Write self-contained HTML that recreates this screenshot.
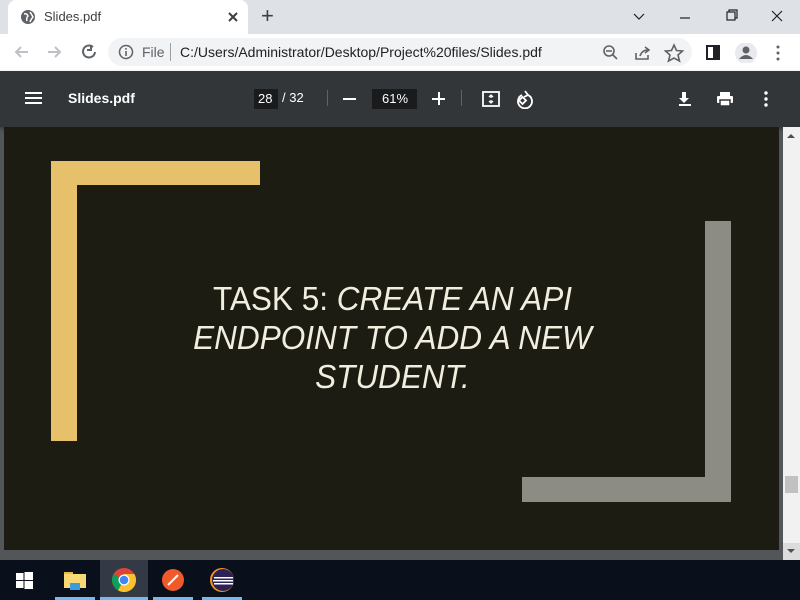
<!DOCTYPE html>
<html><head><style>
*{margin:0;padding:0;box-sizing:border-box}
body{width:800px;height:600px;overflow:hidden;position:relative;font-family:"Liberation Sans",sans-serif;background:#525659}
.a{position:absolute}
</style></head><body>
<!-- tab bar -->
<div class="a" style="left:0;top:0;width:800px;height:34px;background:#dee1e6"></div>
<div class="a" style="left:8px;top:0;width:240px;height:34px;background:#fff;border-radius:8px 8px 0 0"></div>
<svg class="a" style="left:20px;top:9px" width="16" height="16"><circle cx="8" cy="8" r="7" fill="#5f6368"/><path d="M4 5 Q7 4 8 7 Q6 9 7 12 M10 3 Q12 6 13 8 Q11 10 10 13" stroke="#fff" stroke-width="1.5" fill="none"/></svg>
<div class="a" style="left:44px;top:9px;font-size:13px;color:#3c4043">Slides.pdf</div>
<svg class="a" style="left:227px;top:11px" width="12" height="12" stroke="#3c4043" stroke-width="2"><path d="M2 2 l8 8 M10 2 l-8 8"/></svg>
<div class="a" style="left:261px;top:3px;font-size:22px;color:#3c4043">+</div>
<svg class="a" style="left:630px;top:8px" width="160" height="18" stroke="#202124" fill="none" stroke-width="1.2"><path d="M4 6 l5 5 l5 -5"/><path d="M50 10 h10"/><rect x="97" y="4" width="8" height="8"/><path d="M99 4 v-2 h8 v8 h-2"/><path d="M142 3 l10 10 M152 3 l-10 10"/></svg>
<!-- toolbar -->
<div class="a" style="left:0;top:34px;width:800px;height:37px;background:#fff"></div>
<svg class="a" style="left:12px;top:42px" width="90" height="20" fill="none" stroke-width="2"><path d="M16 10 H4 M9 5 l-5 5 5 5" stroke="#bdc1c6"/><path d="M36 10 H48 M43 5 l5 5 -5 5" stroke="#bdc1c6"/><path d="M88 10 a6 6 0 1 1 -2 -5" stroke="#5f6368" transform="translate(-5,0)"/><path d="M80 3 v5 h-4" stroke="#5f6368" transform="translate(-1,0)"/></svg>
<div class="a" style="left:108px;top:38px;width:584px;height:28px;background:#f1f3f4;border-radius:14px"></div>
<svg class="a" style="left:118px;top:44px" width="16" height="16"><circle cx="8" cy="8" r="6.5" stroke="#5f6368" stroke-width="1.5" fill="none"/><rect x="7.2" y="7" width="1.6" height="5" fill="#5f6368"/><rect x="7.2" y="4" width="1.6" height="1.6" fill="#5f6368"/></svg>
<div class="a" style="left:142px;top:44px;font-size:14px;color:#5f6368">File</div>
<div class="a" style="left:170px;top:43px;width:1px;height:18px;background:#9aa0a6"></div>
<div class="a" style="left:180px;top:44px;font-size:14px;color:#202124">C:/Users/Administrator/Desktop/Project%20files/Slides.pdf</div>
<svg class="a" style="left:600px;top:43px" width="190" height="20" fill="none" stroke="#5f6368" stroke-width="1.6"><circle cx="9" cy="8" r="5"/><path d="M13 12 l4 4 M6 8 h6"/><path d="M36 10 v6 h12 v-4 M40 13 q2 -6 8 -6 M45 4 l4 3 -4 3"/><path d="M74 2 l2.5 5.5 6 .5 -4.5 4 1.5 6 -5.5 -3 -5.5 3 1.5 -6 -4.5 -4 6 -.5z"/><rect x="107" y="3" width="12" height="13" stroke="#202124" stroke-width="2"/><rect x="113" y="3" width="6" height="13" fill="#202124" stroke="none"/><circle cx="146" cy="10" r="11" fill="#e8eaed" stroke="none"/><circle cx="146" cy="7" r="3.5" fill="#5f6368" stroke="none"/><path d="M139 16 q7 -8 14 0z" fill="#5f6368" stroke="none"/><circle cx="178" cy="4" r="1.5" fill="#5f6368" stroke="none"/><circle cx="178" cy="10" r="1.5" fill="#5f6368" stroke="none"/><circle cx="178" cy="16" r="1.5" fill="#5f6368" stroke="none"/></svg>
<!-- pdf toolbar -->
<div class="a" style="left:0;top:71px;width:800px;height:56px;background:#323639;box-shadow:0 2px 4px rgba(0,0,0,.4)"></div>
<svg class="a" style="left:25px;top:91px" width="18" height="14" fill="#fff"><rect y="1" width="17" height="2"/><rect y="6" width="17" height="2"/><rect y="11" width="17" height="2"/></svg>
<div class="a" style="left:68px;top:90px;font-size:14px;font-weight:bold;color:#fff">Slides.pdf</div>
<div class="a" style="left:254px;top:89px;width:24px;height:20px;background:#191b1c"></div>
<div class="a" style="left:258px;top:91px;font-size:13px;color:#fff">28</div>
<div class="a" style="left:282px;top:90px;font-size:13px;color:#fff">/ 32</div>
<div class="a" style="left:327px;top:90px;width:1px;height:16px;background:#5f6368"></div>
<div class="a" style="left:343px;top:98px;width:13px;height:2px;background:#fff"></div>
<div class="a" style="left:372px;top:89px;width:45px;height:20px;background:#191b1c"></div>
<div class="a" style="left:382px;top:91px;font-size:13px;color:#fff">61%</div>
<div class="a" style="left:432px;top:98px;width:13px;height:2px;background:#fff"></div>
<div class="a" style="left:438px;top:92px;width:2px;height:13px;background:#fff"></div>
<div class="a" style="left:461px;top:90px;width:1px;height:16px;background:#5f6368"></div>
<svg class="a" style="left:481px;top:89px" width="60" height="20" fill="none" stroke="#fff" stroke-width="1.8"><rect x="2" y="3" width="16" height="14"/><path d="M10 6 v3 M8 8 l2 -2 2 2 M10 14 v-3 M8 12 l2 2 2 -2" stroke-width="1.3"/><path d="M47 6 a7 7 0 1 1 -6 0" /><path d="M44 2 l3 4 -4 2" /><rect x="39" y="9" width="5" height="5" transform="rotate(45 41.5 11.5)"/></svg>
<svg class="a" style="left:676px;top:89px" width="100" height="20" fill="#fff"><path d="M6 3 h4 v6 h3 l-5 5 -5 -5 h3z"/><rect x="3" y="15" width="12" height="2"/><rect x="44" y="3" width="10" height="4"/><rect x="41" y="7" width="16" height="7" rx="1"/><rect x="44" y="11" width="10" height="6" fill="#fff" stroke="#323639" stroke-width="1.5"/><circle cx="90" cy="4" r="1.7"/><circle cx="90" cy="10" r="1.7"/><circle cx="90" cy="16" r="1.7"/></svg>
<!-- slide -->
<div class="a" style="left:4px;top:127px;width:775px;height:423px;background:#1c1c12"></div>
<div class="a" style="left:51px;top:161px;width:26px;height:280px;background:#e6c06a"></div>
<div class="a" style="left:51px;top:161px;width:209px;height:24px;background:#e6c06a"></div>
<div class="a" style="left:705px;top:221px;width:26px;height:281px;background:#8c8c84"></div>
<div class="a" style="left:522px;top:477px;width:209px;height:25px;background:#8c8c84"></div>
<div class="a" style="left:100px;top:279px;width:585px;text-align:center;font-size:33px;line-height:39px;color:#f2eedf;transform:scaleX(0.955);transform-origin:292px 0">TASK 5: <i>CREATE AN API<br>ENDPOINT TO ADD A NEW<br>STUDENT.</i></div>
<!-- scrollbar -->
<div class="a" style="left:783px;top:127px;width:17px;height:433px;background:#f1f1f1"></div>
<div class="a" style="left:787px;top:134px;width:0;height:0;border-left:4px solid transparent;border-right:4px solid transparent;border-bottom:4px solid #505050"></div>
<div class="a" style="left:785px;top:476px;width:13px;height:17px;background:#c1c1c1"></div>
<div class="a" style="left:783px;top:543px;width:17px;height:17px;background:#dcdcdc"></div>
<div class="a" style="left:787px;top:549px;width:0;height:0;border-left:4px solid transparent;border-right:4px solid transparent;border-top:4px solid #505050"></div>
<!-- taskbar -->
<div class="a" style="left:0;top:560px;width:800px;height:40px;background:#0a0f1c"></div>
<svg class="a" style="left:16px;top:572px" width="17" height="17" fill="#fff"><rect x="0" y="1" width="7.5" height="7"/><rect x="8.5" y="0" width="8.5" height="8"/><rect x="0" y="9" width="7.5" height="7"/><rect x="8.5" y="9" width="8.5" height="8"/></svg>
<svg class="a" style="left:63px;top:570px" width="24" height="20"><rect x="1" y="2" width="9" height="4" fill="#e8b84a"/><rect x="1" y="4" width="22" height="14" fill="#f8d775"/><rect x="7" y="13" width="10" height="7" fill="#3c9be0"/></svg>
<div class="a" style="left:55px;top:597px;width:40px;height:3px;background:#76b9ed"></div>
<div class="a" style="left:100px;top:560px;width:48px;height:40px;background:#333a45"></div>
<div class="a" style="left:100px;top:597px;width:48px;height:3px;background:#76b9ed"></div>
<svg class="a" style="left:112px;top:568px" width="24" height="24"><circle cx="12" cy="12" r="12" fill="#db4437"/><path d="M12 12 L1.6 6 A12 12 0 0 0 6 22.4z" fill="#0f9d58"/><path d="M12 12 L6 22.4 A12 12 0 0 0 22.4 6 L12 6z" fill="#fbc02d"/><circle cx="12" cy="12" r="5.5" fill="#fff"/><circle cx="12" cy="12" r="4.3" fill="#4285f4"/></svg>
<svg class="a" style="left:161px;top:568px" width="24" height="24"><circle cx="12" cy="12" r="11" fill="#f05a2a"/><path d="M7 17 L17 7" stroke="#fff" stroke-width="2"/></svg>
<div class="a" style="left:153px;top:597px;width:40px;height:3px;background:#76b9ed"></div>
<svg class="a" style="left:210px;top:568px" width="24" height="24"><circle cx="12" cy="12" r="12" fill="#f7941e"/><circle cx="13" cy="12" r="11" fill="#2c2255"/><rect x="4" y="9" width="19" height="1.5" fill="#fff"/><rect x="3" y="12" width="20" height="1.5" fill="#fff"/><rect x="4" y="15" width="19" height="1.5" fill="#fff"/></svg>
<div class="a" style="left:202px;top:597px;width:40px;height:3px;background:#76b9ed"></div>
</body></html>
